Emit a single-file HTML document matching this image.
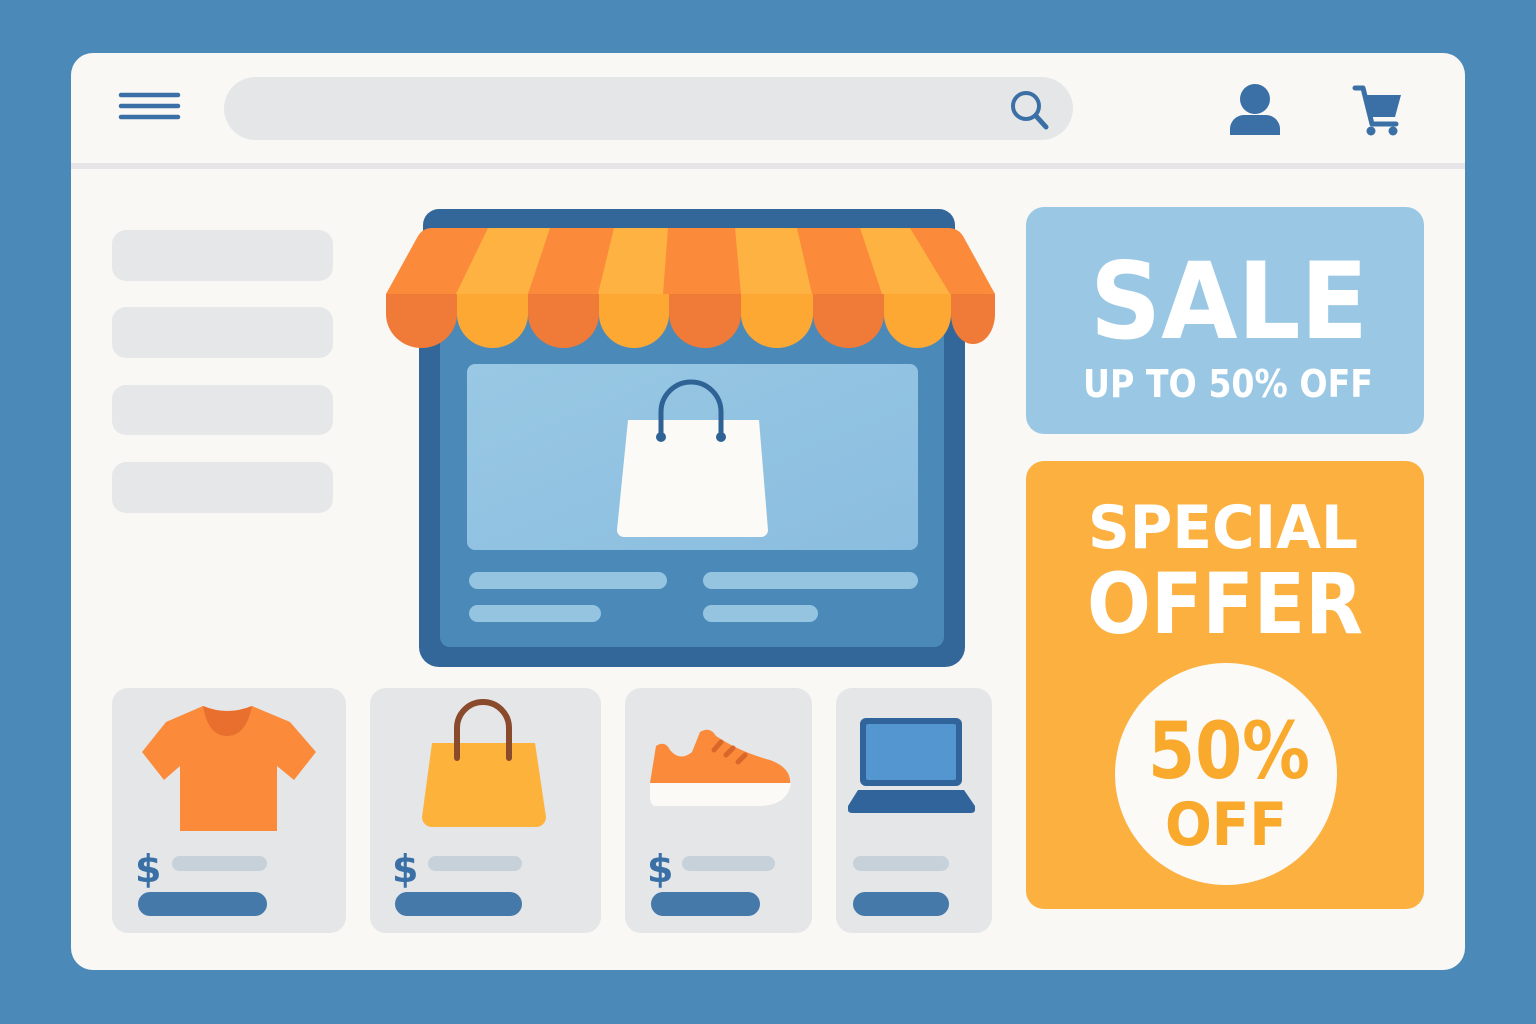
<!DOCTYPE html>
<html><head><meta charset="utf-8"><style>
html,body{margin:0;padding:0;background:#4a89b8;}
svg{display:block}
text{font-family:"DejaVu Sans","Liberation Sans",sans-serif;font-weight:bold}
</style></head><body>
<svg width="1536" height="1024" viewBox="0 0 1536 1024" xmlns="http://www.w3.org/2000/svg">
<defs>
<linearGradient id="scr" x1="0" y1="0" x2="1" y2="1"><stop offset="0" stop-color="#98c8e3"/><stop offset="1" stop-color="#8bbde0"/></linearGradient>
</defs>
<rect width="1536" height="1024" fill="#4a89b8"/>
<rect x="71" y="53" width="1394" height="917" rx="22" fill="#f9f8f5"/>
<rect x="71" y="163" width="1394" height="6" fill="#e6e6e9"/>
<g stroke="#3b70a6" stroke-width="4.5" stroke-linecap="round"><line x1="121" y1="95" x2="178" y2="95"/><line x1="121" y1="106" x2="178" y2="106"/><line x1="121" y1="117" x2="178" y2="117"/></g>
<rect x="224" y="77" width="849" height="63" rx="31.5" fill="#e5e6e8"/>
<circle cx="1026" cy="106" r="13" fill="none" stroke="#3b70a6" stroke-width="4"/>
<line x1="1036" y1="116" x2="1046" y2="127" stroke="#3b70a6" stroke-width="5" stroke-linecap="round"/>
<circle cx="1255" cy="99" r="15" fill="#3b70a6"/>
<path d="M1230 135 v-6 a14 14 0 0 1 14 -14 h22 a14 14 0 0 1 14 14 v6 z" fill="#3b70a6"/>
<path d="M1355 88 h8 l9 36 h24" fill="none" stroke="#3b70a6" stroke-width="5" stroke-linecap="round" stroke-linejoin="round"/>
<path d="M1364 95 h37 l-6 22 h-26 z" fill="#3b70a6"/>
<circle cx="1371" cy="131" r="4.5" fill="#3b70a6"/><circle cx="1393" cy="131" r="4.5" fill="#3b70a6"/>
<g fill="#e6e7e9"><rect x="112" y="230" width="221" height="51" rx="14"/><rect x="112" y="307" width="221" height="51" rx="14"/><rect x="112" y="385" width="221" height="50" rx="14"/><rect x="112" y="462" width="221" height="51" rx="14"/></g>
<rect x="423" y="209" width="532" height="60" rx="16" fill="#33679a"/>
<rect x="419" y="290" width="546" height="377" rx="20" fill="#33679a"/>
<rect x="440" y="300" width="504" height="347" rx="10" fill="#4a89b8"/>
<rect x="467" y="364" width="451" height="186" rx="8" fill="url(#scr)"/>
<g fill="#95c4e1"><rect x="469" y="572" width="198" height="17" rx="8.5"/><rect x="703" y="572" width="215" height="17" rx="8.5"/><rect x="469" y="605" width="132" height="17" rx="8.5"/><rect x="703" y="605" width="115" height="17" rx="8.5"/></g>
<path d="M628 420 h131 l9 110 a7 7 0 0 1 -7 7 h-137 a7 7 0 0 1 -7 -7 z" fill="#fbfaf7"/>
<path d="M661 437 v-25 a30 30 0 0 1 60 0 v25" fill="none" stroke="#2f6396" stroke-width="5" stroke-linecap="round"/>
<circle cx="661" cy="437" r="5" fill="#2f6396"/><circle cx="721" cy="437" r="5" fill="#2f6396"/>
<path d="M432 228 H948 Q958 228 963 236 L995 294 H386 L418 236 Q423 228 432 228 Z" fill="#fb8a3a"/>
<g fill="#fdb241">
<path d="M488 228 H550 L528 294 H456 Z"/>
<path d="M614 228 H668 L663 294 H598 Z"/>
<path d="M735 228 H797 L812 294 H741 Z"/>
<path d="M860 228 H910 L950 294 H882 Z"/>
</g>
<g>
<path d="M386 294 h71 v20 a35.5 34 0 0 1 -71 0 z" fill="#f07a37"/>
<path d="M457 294 h71 v20 a35.5 34 0 0 1 -71 0 z" fill="#fda833"/>
<path d="M528 294 h71 v20 a35.5 34 0 0 1 -71 0 z" fill="#f07a37"/>
<path d="M599 294 h70 v20 a35 34 0 0 1 -70 0 z" fill="#fda833"/>
<path d="M669 294 h72 v20 a36 34 0 0 1 -72 0 z" fill="#f07a37"/>
<path d="M741 294 h72 v20 a36 34 0 0 1 -72 0 z" fill="#fda833"/>
<path d="M813 294 h71 v20 a35.5 34 0 0 1 -71 0 z" fill="#f07a37"/>
<path d="M884 294 h67 v20 a33.5 34 0 0 1 -67 0 z" fill="#fda833"/>
<path d="M951 294 h44 v20 a22 30 0 0 1 -44 0 z" fill="#f07a37"/>
</g>
<rect x="1026" y="207" width="398" height="227" rx="18" fill="#9ac8e4"/>
<text x="1229" y="338" font-size="106" fill="#fff" text-anchor="middle" textLength="278" lengthAdjust="spacingAndGlyphs">SALE</text>
<text x="1228" y="397" font-size="38" fill="#fff" text-anchor="middle" textLength="290" lengthAdjust="spacingAndGlyphs">UP TO 50% OFF</text>
<rect x="1026" y="461" width="398" height="448" rx="18" fill="#fbb040"/>
<text x="1223" y="548" font-size="60" fill="#fff" text-anchor="middle" textLength="270" lengthAdjust="spacingAndGlyphs">SPECIAL</text>
<text x="1225" y="633" font-size="84" fill="#fff" text-anchor="middle" textLength="276" lengthAdjust="spacingAndGlyphs">OFFER</text>
<circle cx="1226" cy="774" r="111" fill="#fbfaf7"/>
<text x="1229" y="778" font-size="78" fill="#f9a92c" text-anchor="middle" textLength="162" lengthAdjust="spacingAndGlyphs">50%</text>
<text x="1226" y="845" font-size="60" fill="#f9a92c" text-anchor="middle" textLength="122" lengthAdjust="spacingAndGlyphs">OFF</text>
<g fill="#e5e6e8"><rect x="112" y="688" width="234" height="245" rx="16"/><rect x="370" y="688" width="231" height="245" rx="16"/><rect x="625" y="688" width="187" height="245" rx="16"/><rect x="836" y="688" width="156" height="245" rx="16"/></g>
<path d="M203 706 Q227 716 252 706 L290 722 L316 752 L294 780 L277 766 L277 831 H180 V766 L164 780 L142 752 L166 722 Z" fill="#fb8a3a"/>
<path d="M203 706 Q227 716 252 706 Q246 736 227 736 Q208 736 203 706Z" fill="#e86f2e"/>
<path d="M432 743 h103 l11 74 a10 10 0 0 1 -10 10 h-104 a10 10 0 0 1 -10 -10 z" fill="#fdb23c"/>
<path d="M457 758 v-30 a26 26 0 0 1 52 0 v30" fill="none" stroke="#8a4a2c" stroke-width="6" stroke-linecap="round"/>
<path d="M656 746 Q665 740 670 750 Q680 762 692 752 L700 732 Q710 726 716 736 Q740 752 770 760 Q792 768 790 785 L650 783 Z" fill="#fb8a3a"/>
<path d="M650 783 H791 Q788 805 760 806 H656 Q650 806 650 795 Z" fill="#fbfaf7"/>
<g stroke="#d9672c" stroke-width="5" stroke-linecap="round"><line x1="714" y1="750" x2="721" y2="742"/><line x1="726" y1="755" x2="733" y2="748"/><line x1="738" y1="762" x2="745" y2="755"/></g>
<rect x="860" y="718" width="102" height="68" rx="6" fill="#30649a"/>
<rect x="866" y="724" width="90" height="56" rx="2" fill="#5496cf"/>
<path d="M858 790 H964 L975 806 V810 Q975 813 970 813 H853 Q848 813 848 810 V806 Z" fill="#30649a"/>
<g font-size="38" fill="#3b70a6"><text x="135" y="882">$</text><text x="392" y="882">$</text><text x="647" y="882">$</text></g>
<g fill="#c7d1d9"><rect x="172" y="856" width="95" height="15" rx="7.5"/><rect x="428" y="856" width="94" height="15" rx="7.5"/><rect x="682" y="856" width="93" height="15" rx="7.5"/><rect x="853" y="856" width="96" height="15" rx="7.5"/></g>
<g fill="#4479aa"><rect x="138" y="892" width="129" height="24" rx="12"/><rect x="395" y="892" width="127" height="24" rx="12"/><rect x="651" y="892" width="109" height="24" rx="12"/><rect x="853" y="892" width="96" height="24" rx="12"/></g>
</svg>
</body></html>
